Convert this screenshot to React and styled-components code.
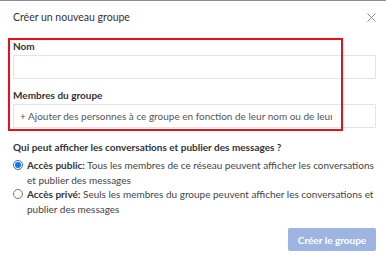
import React from "react";
import styled, { createGlobalStyle } from "styled-components";

const Global = createGlobalStyle`
  html, body { margin: 0; padding: 0; background: #fff; }
  body { font-family: Lato, "Open Sans", sans-serif; color: #333; }
  * { box-sizing: border-box; }
`;

const Dialog = styled.div`
  position: relative;
  width: 386px;
  height: 264px;
  border-top: 1px solid #8c8c8c;
  background: #fff;
  display: flex;
  flex-direction: column;
  padding: 0 10px 0 13px;
  overflow: hidden;
`;

const Header = styled.div`
  display: flex;
  justify-content: space-between;
  align-items: center;
  height: 16px;
  margin-top: 8px;
`;

const Title = styled.div`
  font-size: 10.5px;
  line-height: 16px;
  color: #333;
`;

const Close = styled.div`
  width: 9px;
  height: 9px;
  margin-right: 0;
  display: flex;
`;

const Label = styled.div`
  font-size: 10px;
  font-weight: 700;
  line-height: 14px;
  color: #333;
  margin-top: ${(p) => p.$top}px;
  margin-bottom: 2px;
`;

const Input = styled.div`
  height: 24px;
  border: 1px solid #e3e3e3;
  border-radius: 1px;
  display: flex;
  align-items: center;
  padding-left: 6px;
  overflow: hidden;
`;

const Placeholder = styled.div`
  width: 312px;
  white-space: nowrap;
  overflow: hidden;
  font-size: 10px;
  color: #555;
`;

const Question = styled.div`
  font-size: 10px;
  font-weight: 700;
  line-height: 14px;
  margin-top: 12px;
  margin-bottom: 4px;
`;

const Option = styled.div`
  display: flex;
  align-items: flex-start;
  gap: 4px;
`;

const Radio = styled.span`
  flex: none;
  width: 10px;
  height: 10px;
  margin-top: 2px;
  border-radius: 50%;
  border: 1px solid ${(p) => (p.$checked ? "#1a73e8" : "#777")};
  background: #fff;
  display: flex;
  align-items: center;
  justify-content: center;
  &::after {
    content: "";
    width: 6px;
    height: 6px;
    border-radius: 50%;
    background: ${(p) => (p.$checked ? "#1a73e8" : "transparent")};
  }
`;

const OptionText = styled.div`
  font-size: 10px;
  line-height: 14.5px;
  color: #444;
  b { font-weight: 700; color: #333; }
`;

const Footer = styled.div`
  margin-top: auto;
  margin-bottom: 13px;
  display: flex;
  justify-content: flex-end;
`;

const Button = styled.button`
  width: 88px;
  height: 23px;
  border: none;
  border-radius: 2px;
  background: #9db5e0;
  color: #fff;
  font-family: inherit;
  font-size: 10px;
  font-weight: 700;
  padding: 0;
`;

const Highlight = styled.div`
  position: absolute;
  left: 8px;
  top: 37px;
  width: 335px;
  height: 93px;
  border: 2px solid #e8101a;
  pointer-events: none;
`;

export default function App() {
  return (
    <>
      <Global />
      <Dialog>
        <Header>
          <Title>Créer un nouveau groupe</Title>
          <Close>
            <svg width="9" height="9" viewBox="0 0 9 9">
              <path d="M0.5 0.5L8.5 8.5M8.5 0.5L0.5 8.5" stroke="#8a8a8a" strokeWidth="1" />
            </svg>
          </Close>
        </Header>
        <Label $top={14}>Nom</Label>
        <Input />
        <Label $top={9}>Membres du groupe</Label>
        <Input>
          <Placeholder>
            + Ajouter des personnes à ce groupe en fonction de leur nom ou de leur courrier électronique
          </Placeholder>
        </Input>
        <Question>Qui peut afficher les conversations et publier des messages ?</Question>
        <Option>
          <Radio $checked />
          <OptionText>
            <b>Accès public:</b> Tous les membres de ce réseau peuvent afficher les conversations et publier des messages
          </OptionText>
        </Option>
        <Option>
          <Radio />
          <OptionText>
            <b>Accès privé:</b> Seuls les membres du groupe peuvent afficher les conversations et publier des messages
          </OptionText>
        </Option>
        <Footer>
          <Button>Créer le groupe</Button>
        </Footer>
        <Highlight />
      </Dialog>
    </>
  );
}
